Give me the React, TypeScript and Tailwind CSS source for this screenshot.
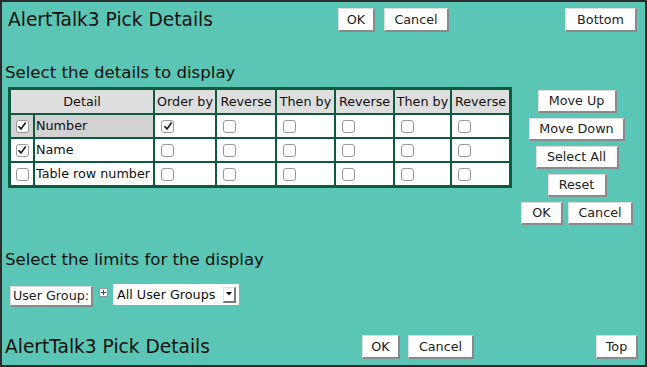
import React from 'react';

const btn =
  'flex items-center justify-center bg-white text-[12.75px] text-[#222] border border-r-2 border-b-2 border-t-[#dcdcdc] border-l-[#dcdcdc] border-r-[#8a8a8a] border-b-[#8a8a8a]';

function Btn({ className, children }: { className: string; children: React.ReactNode }) {
  return <div className={`${btn} ${className}`}>{children}</div>;
}

function Check({ on }: { on?: boolean }) {
  return (
    <span className="w-[13px] h-[13px] border border-[#999] rounded-[3px] bg-white flex items-center justify-center">
      {on && (
        <svg width="10" height="10" viewBox="0 0 10 10">
          <path d="M1.5 5.2 L4 7.9 L8.7 1.5" fill="none" stroke="#1a1a1a" strokeWidth="1.6" />
        </svg>
      )}
    </span>
  );
}

const headers = ['Order by', 'Reverse', 'Then by', 'Reverse', 'Then by', 'Reverse'];

const rows = [
  { label: 'Number', on: true, order: true, hilite: true },
  { label: 'Name', on: true, order: false, hilite: false },
  { label: 'Table row number', on: false, order: false, hilite: false },
];

export default function App() {
  return (
    <div className="w-[647px] h-[367px] border-2 border-[#2b2b2b] bg-[#5bc6b5] font-['DejaVu_Sans',sans-serif] text-[#111] flex flex-col">
      {/* top bar */}
      <div className="flex items-center h-[24px] mt-[6px] pl-[6px] pr-[8px]">
        <h1 className="w-[330px] text-[18.6px] leading-[24px] whitespace-nowrap">AlertTalk3 Pick Details</h1>
        <Btn className="w-[37px] h-[24px]">OK</Btn>
        <Btn className="w-[65px] h-[24px] ml-[9px]">Cancel</Btn>
        <Btn className="w-[72px] h-[24px] ml-auto">Bottom</Btn>
      </div>

      <h2 className="mt-[31px] pl-[3px] text-[16.6px] leading-[19px]">Select the details to display</h2>

      <div className="mt-[5px] pl-[6px] flex items-start">
        <div className="grid grid-cols-[22px_118px_60px_58px_57px_57px_55px_57px] grid-rows-[23px_22px_22px_22px] gap-[2px] p-[3px] bg-[#0d5b3e] text-[12.75px]">
          <div className="col-span-2 bg-[#dedede] flex items-center justify-center">Detail</div>
          {headers.map((h, i) => (
            <div key={i} className="bg-[#dedede] flex items-center justify-center whitespace-nowrap">
              {h}
            </div>
          ))}
          {rows.map((r) => (
            <React.Fragment key={r.label}>
              <div className={`${r.hilite ? 'bg-[#d2d2d2]' : 'bg-white'} flex items-center justify-center`}>
                <Check on={r.on} />
              </div>
              <div className={`${r.hilite ? 'bg-[#d2d2d2]' : 'bg-white'} flex items-center pl-[1px] whitespace-nowrap`}>
                {r.label}
              </div>
              {headers.map((_, i) => (
                <div key={i} className="bg-white flex items-center pl-[6px]">
                  <Check on={i === 0 && r.order} />
                </div>
              ))}
            </React.Fragment>
          ))}
        </div>

        <div className="ml-[9px] w-[112px] flex flex-col items-center gap-[5px] pt-[3px]">
          <Btn className="w-[79px] h-[23px]">Move Up</Btn>
          <Btn className="w-[96px] h-[23px]">Move Down</Btn>
          <Btn className="w-[83px] h-[23px]">Select All</Btn>
          <Btn className="w-[59px] h-[23px]">Reset</Btn>
          <div className="flex gap-[5px]">
            <Btn className="w-[42px] h-[23px]">OK</Btn>
            <Btn className="w-[65px] h-[23px]">Cancel</Btn>
          </div>
        </div>
      </div>

      <h2 className="mt-[25px] pl-[3px] text-[16.6px] leading-[19px]">Select the limits for the display</h2>

      <div className="mt-[15px] pl-[8px] flex items-start">
        <Btn className="w-[83px] h-[21px] mt-[2px]">User Group:</Btn>
        <svg className="ml-[6px] mt-[4px]" width="9" height="9" viewBox="0 0 9 9">
          <rect x="0.5" y="0.5" width="8" height="8" fill="#fff" stroke="#8a98ad" />
          <path d="M2 4.5 H7 M4.5 2 V7" stroke="#2d4a8a" strokeWidth="1" />
        </svg>
        <div className="ml-[5px] w-[126px] h-[21px] bg-white flex items-center pl-[4px] pr-[3px] text-[12.75px]">
          <span className="flex-1 whitespace-nowrap">All User Groups</span>
          <span className="w-[13px] h-[16px] bg-white border border-r-2 border-b-2 border-t-[#e2e2e2] border-l-[#e2e2e2] border-r-[#7a7a7a] border-b-[#7a7a7a] flex items-center justify-center">
            <svg width="6" height="4" viewBox="0 0 6 4">
              <path d="M0 0 H6 L3 3.5 Z" fill="#111" />
            </svg>
          </span>
        </div>
      </div>

      {/* bottom bar */}
      <div className="mt-auto mb-[6px] flex items-center h-[24px] pl-[3px] pr-[7px]">
        <h1 className="w-[357px] text-[18.6px] leading-[24px] whitespace-nowrap">AlertTalk3 Pick Details</h1>
        <Btn className="w-[38px] h-[24px]">OK</Btn>
        <Btn className="w-[66px] h-[24px] ml-[8px]">Cancel</Btn>
        <Btn className="w-[42px] h-[24px] ml-auto">Top</Btn>
      </div>
    </div>
  );
}
